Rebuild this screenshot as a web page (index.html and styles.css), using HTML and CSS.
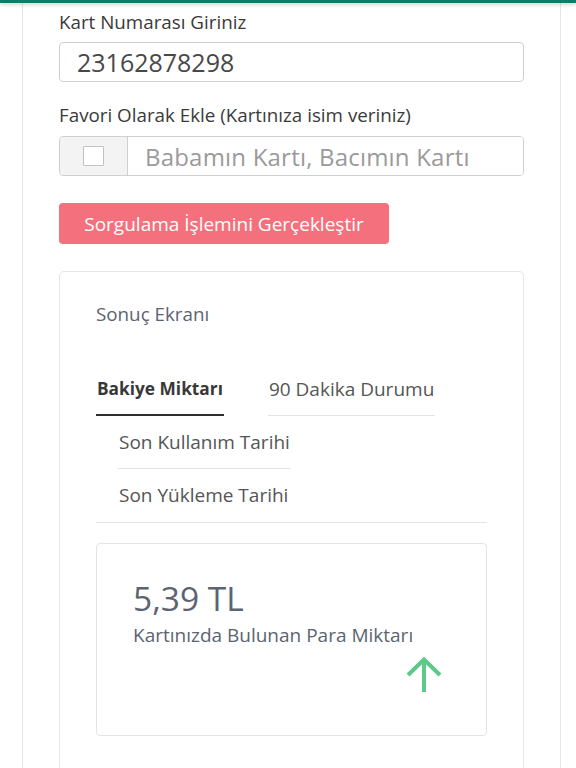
FILE: index.html
```html
<!DOCTYPE html>
<html lang="tr">
<head>
<meta charset="utf-8">
<title>Kart Sorgulama</title>
<link rel="stylesheet" href="styles.css">
</head>
<body>
<div class="topbar"></div>
<main class="page">
  <label class="label" for="kart">Kart Numarası Giriniz</label>
  <input class="input" id="kart" type="text" value="23162878298">

  <label class="label label-second" for="isim">Favori Olarak Ekle (Kartınıza isim veriniz)</label>
  <div class="input-group">
    <span class="addon"><span class="check"></span></span>
    <input class="input group-input" id="isim" type="text" placeholder="Babamın Kartı, Bacımın Kartı">
  </div>

  <button class="btn" type="button">Sorgulama İşlemini Gerçekleştir</button>

  <section class="card">
    <h2 class="card-title">Sonuç Ekranı</h2>
    <nav class="tabs">
      <a class="tab active">Bakiye Miktarı</a>
      <a class="tab">90 Dakika Durumu</a>
      <a class="tab">Son Kullanım Tarihi</a>
      <a class="tab">Son Yükleme Tarihi</a>
    </nav>
    <div class="balance">
      <div class="amount">5,39 TL</div>
      <div class="amount-label">Kartınızda Bulunan Para Miktarı</div>
      <div class="arrow-row">
        <svg class="arrow" width="38" height="36" viewBox="0 0 38 36" aria-hidden="true">
          <path d="M19 3 V35 M3 18 L19 2.5 L35 18" fill="none" stroke="#5cc98a" stroke-width="4" stroke-linecap="butt" stroke-linejoin="miter"/>
        </svg>
      </div>
    </div>
  </section>
</main>
</body>
</html>
```
FILE: styles.css
```css
* { box-sizing: border-box; }
html, body { margin: 0; padding: 0; background: #fff; }
body {
  font-family: "Open Sans", "Noto Sans", sans-serif;
  color: #3a3a3a;
  overflow: hidden;
  height: 768px;
}
.topbar {
  height: 3px;
  background: #127c66;
  box-shadow: 0 1px 4px rgba(0,0,0,0.25);
  position: relative;
  z-index: 2;
}
.page {
  margin-left: 22px;
  width: 539px;
  min-height: 765px;
  border-left: 1px solid #e6e6e6;
  border-right: 1px solid #e6e6e6;
  padding: 7px 36px 0 36px;
  display: flex;
  flex-direction: column;
}
.label {
  display: block;
  font-size: 18.8px;
  line-height: 24px;
  color: #3a3a3a;
  margin-bottom: 8px;
}
.label-second { margin-top: 21px; margin-bottom: 9px; }
.input {
  display: block;
  width: 100%;
  height: 40px;
  border: 1px solid #cfcfcf;
  border-radius: 4px;
  padding: 0 17px;
  font-family: inherit;
  font-size: 25px;
  color: #484848;
  background: #fff;
  outline: none;
}
.input-group {
  display: flex;
  height: 40px;
  border: 1px solid #cfcfcf;
  border-radius: 4px;
  overflow: hidden;
}
.addon {
  width: 68px;
  flex: none;
  background: #f3f3f3;
  border-right: 1px solid #cfcfcf;
  display: flex;
  align-items: center;
  justify-content: center;
}
.check {
  width: 21px;
  height: 20px;
  border: 1.5px solid #c2c2c2;
  background: #fff;
  border-radius: 1px;
}
.group-input {
  border: none;
  border-radius: 0;
  height: 38px;
  flex: 1;
  padding-left: 17px;
  font-size: 24px;
  letter-spacing: 0.2px;
}
.group-input::placeholder { color: #9a9a9a; opacity: 1; }
.btn {
  align-self: flex-start;
  margin-top: 27px;
  height: 41px;
  width: 330px;
  background: #f4707c;
  border: none;
  border-radius: 4px;
  color: #fff;
  font-family: inherit;
  font-size: 19px;
  padding: 0;
  text-align: center;
}
.card {
  margin-top: 27px;
  border: 1px solid #e6e6e6;
  border-radius: 5px;
  padding: 30px 36px 40px 36px;
}
.card-title {
  margin: 0;
  font-weight: 400;
  font-size: 18.8px;
  line-height: 24px;
  color: #5b6470;
}
.tabs {
  margin-top: 37px;
  display: flex;
  flex-wrap: wrap;
  border-bottom: 1px solid #e3e3e3;
}
.tab {
  display: block;
  font-size: 19px;
  line-height: 22px;
  padding: 15px 1px 15px 1px;
  margin: 0 22px;
  color: #555;
  border-bottom: 1px solid #e3e3e3;
}
.tab:first-child { margin-left: 0; }
.tab:last-child { border-bottom: none; padding-bottom: 16px; }
.tab.active {
  font-weight: 700;
  font-size: 17.3px;
  color: #383838;
  border-bottom: 2px solid #2b2f33;
  padding-bottom: 14px;
}
.balance {
  margin-top: 20px;
  border: 1px solid #e3e3e3;
  border-radius: 4px;
  padding: 33px 36px 42px 36px;
  color: #5b6470;
}
.amount {
  font-size: 33.5px;
  line-height: 42px;
}
.amount-label {
  font-size: 19px;
  line-height: 24px;
  margin-top: 4px;
}
.arrow-row {
  display: flex;
  justify-content: flex-end;
  padding-right: 7px;
  margin-top: 10px;
}
.arrow { display: block; }
```
